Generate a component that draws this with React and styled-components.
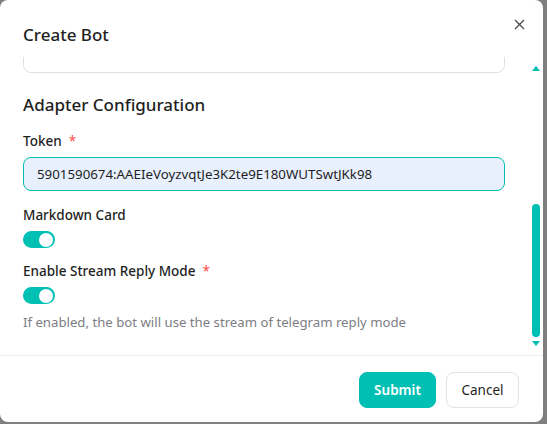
import React, { useLayoutEffect, useRef } from "react";
import styled, { createGlobalStyle } from "styled-components";

const teal = "#00bfb3";

const GlobalStyle = createGlobalStyle`
  html, body {
    margin: 0;
    padding: 0;
    background: #7f7f7f;
    font-family: "Noto Sans", "Open Sans", sans-serif;
    color: #1f1f1f;
  }
  * { box-sizing: border-box; }
`;

const Modal = styled.div`
  width: 543px;
  height: 422px;
  background: #fff;
  border-radius: 8px;
  display: flex;
  flex-direction: column;
  overflow: hidden;
`;

const Header = styled.div`
  height: 57px;
  flex: none;
  display: flex;
  justify-content: space-between;
  align-items: flex-start;
  padding: 12px 12px 0 23px;
`;

const Title = styled.h2`
  margin: 10px 0 0;
  font-size: 17px;
  line-height: 26px;
  font-weight: 500;
`;

const CloseButton = styled.button`
  width: 24px;
  height: 24px;
  border: none;
  background: none;
  padding: 0;
  display: flex;
  align-items: center;
  justify-content: center;
  color: #4a4a4a;
  cursor: pointer;
`;

const BodyFrame = styled.div`
  flex: 1;
  position: relative;
  min-height: 0;
`;

const Scroller = styled.div`
  height: 100%;
  overflow: hidden;
  padding: 0 38px 0 23px;
`;

const Content = styled.div`
  padding: 16px 0 23px;
`;

const Field = styled.div`
  display: flex;
  flex-direction: column;
  gap: 6px;
  margin-bottom: ${p => p.$gap ?? 14}px;
`;

const Label = styled.label`
  font-size: 13.5px;
  line-height: 20px;
  font-weight: 500;
  color: #1f1f1f;
`;

const Required = styled.span`
  color: #ff4d4f;
  margin-left: 7px;
  font-weight: 400;
`;

const Input = styled.div`
  height: 34px;
  border: 1px solid ${p => (p.$active ? teal : "#e0e0e0")};
  background: ${p => (p.$active ? "#e8f0fe" : "#fff")};
  border-radius: 8px;
  padding: 0 13px;
  display: flex;
  align-items: center;
  font-size: 13.3px;
  color: #1f1f1f;
`;

const TextArea = styled(Input)`
  height: 64px;
`;

const SectionTitle = styled.h3`
  margin: 19px 0 13px;
  font-size: 17px;
  line-height: 26px;
  font-weight: 500;
`;

const Switch = styled.div`
  width: 32px;
  height: 17px;
  border-radius: 9px;
  background: ${p => (p.$on ? teal : "#ccc")};
  display: flex;
  align-items: center;
  justify-content: ${p => (p.$on ? "flex-end" : "flex-start")};
  padding: 0 2px;
`;

const Knob = styled.span`
  width: 14px;
  height: 14px;
  border-radius: 50%;
  background: #fff;
`;

const Hint = styled.div`
  margin-top: 8px;
  font-size: 13.2px;
  line-height: 20px;
  color: #7d7d85;
`;

const ScrollRail = styled.div`
  position: absolute;
  top: 0;
  bottom: 0;
  right: 3px;
  width: 9px;
  display: flex;
  flex-direction: column;
  align-items: center;
  padding: 9px 0 9px;
`;

const Arrow = styled.span`
  width: 0;
  height: 0;
  border-left: 4px solid transparent;
  border-right: 4px solid transparent;
  ${p => (p.$up ? `border-bottom: 5px solid ${teal};` : `border-top: 5px solid ${teal};`)}
`;

const Track = styled.div`
  flex: 1;
  width: 100%;
  display: flex;
  flex-direction: column;
  justify-content: flex-end;
  padding-bottom: 4px;
`;

const Thumb = styled.div`
  height: 133px;
  width: 8px;
  margin: 0 auto;
  border-radius: 4px;
  background: ${teal};
`;

const Footer = styled.div`
  flex: none;
  border-top: 1px solid #ececec;
  display: flex;
  justify-content: flex-end;
  gap: 10px;
  padding: 16px 24px 14px;
`;

const Button = styled.button`
  height: 36px;
  min-width: ${p => (p.$primary ? 77 : 73)}px;
  padding: 0 14px;
  border-radius: 8px;
  font-family: inherit;
  font-size: 13.5px;
  cursor: pointer;
  border: 1px solid ${p => (p.$primary ? teal : "#e3e3e3")};
  background: ${p => (p.$primary ? teal : "#fff")};
  color: ${p => (p.$primary ? "#fff" : "#1f1f1f")};
  font-weight: ${p => (p.$primary ? 600 : 400)};
`;

function Toggle({ on }) {
  return (
    <Switch $on={on}>
      <Knob />
    </Switch>
  );
}

export default function App() {
  const scrollRef = useRef(null);

  // modal body is scrolled to the bottom
  useLayoutEffect(() => {
    const el = scrollRef.current;
    if (el) el.scrollTop = el.scrollHeight;
  }, []);

  return (
    <>
      <GlobalStyle />
      <Modal>
        <Header>
          <Title>Create Bot</Title>
          <CloseButton aria-label="Close">
            <svg width="11" height="11" viewBox="0 0 11 11">
              <path d="M1 1 L10 10 M10 1 L1 10" stroke="currentColor" strokeWidth="1.3" />
            </svg>
          </CloseButton>
        </Header>
        <BodyFrame>
          <Scroller ref={scrollRef}>
            <Content>
              <Field>
                <Label>Bot Name<Required>*</Required></Label>
                <Input>telegram-bot</Input>
              </Field>
              <Field>
                <Label>Platform<Required>*</Required></Label>
                <Input>Telegram</Input>
              </Field>
              <Field $gap={0}>
                <Label>Description</Label>
                <TextArea />
              </Field>
              <SectionTitle>Adapter Configuration</SectionTitle>
              <Field>
                <Label>Token<Required>*</Required></Label>
                <Input $active>5901590674:AAEIeVoyzvqtJe3K2te9E180WUTSwtJKk98</Input>
              </Field>
              <Field $gap={13}>
                <Label>Markdown Card</Label>
                <Toggle on />
              </Field>
              <Field $gap={0}>
                <Label>Enable Stream Reply Mode<Required>*</Required></Label>
                <Toggle on />
              </Field>
              <Hint>If enabled, the bot will use the stream of telegram reply mode</Hint>
            </Content>
          </Scroller>
          <ScrollRail>
            <Arrow $up />
            <Track>
              <Thumb />
            </Track>
            <Arrow />
          </ScrollRail>
        </BodyFrame>
        <Footer>
          <Button $primary>Submit</Button>
          <Button>Cancel</Button>
        </Footer>
      </Modal>
    </>
  );
}
